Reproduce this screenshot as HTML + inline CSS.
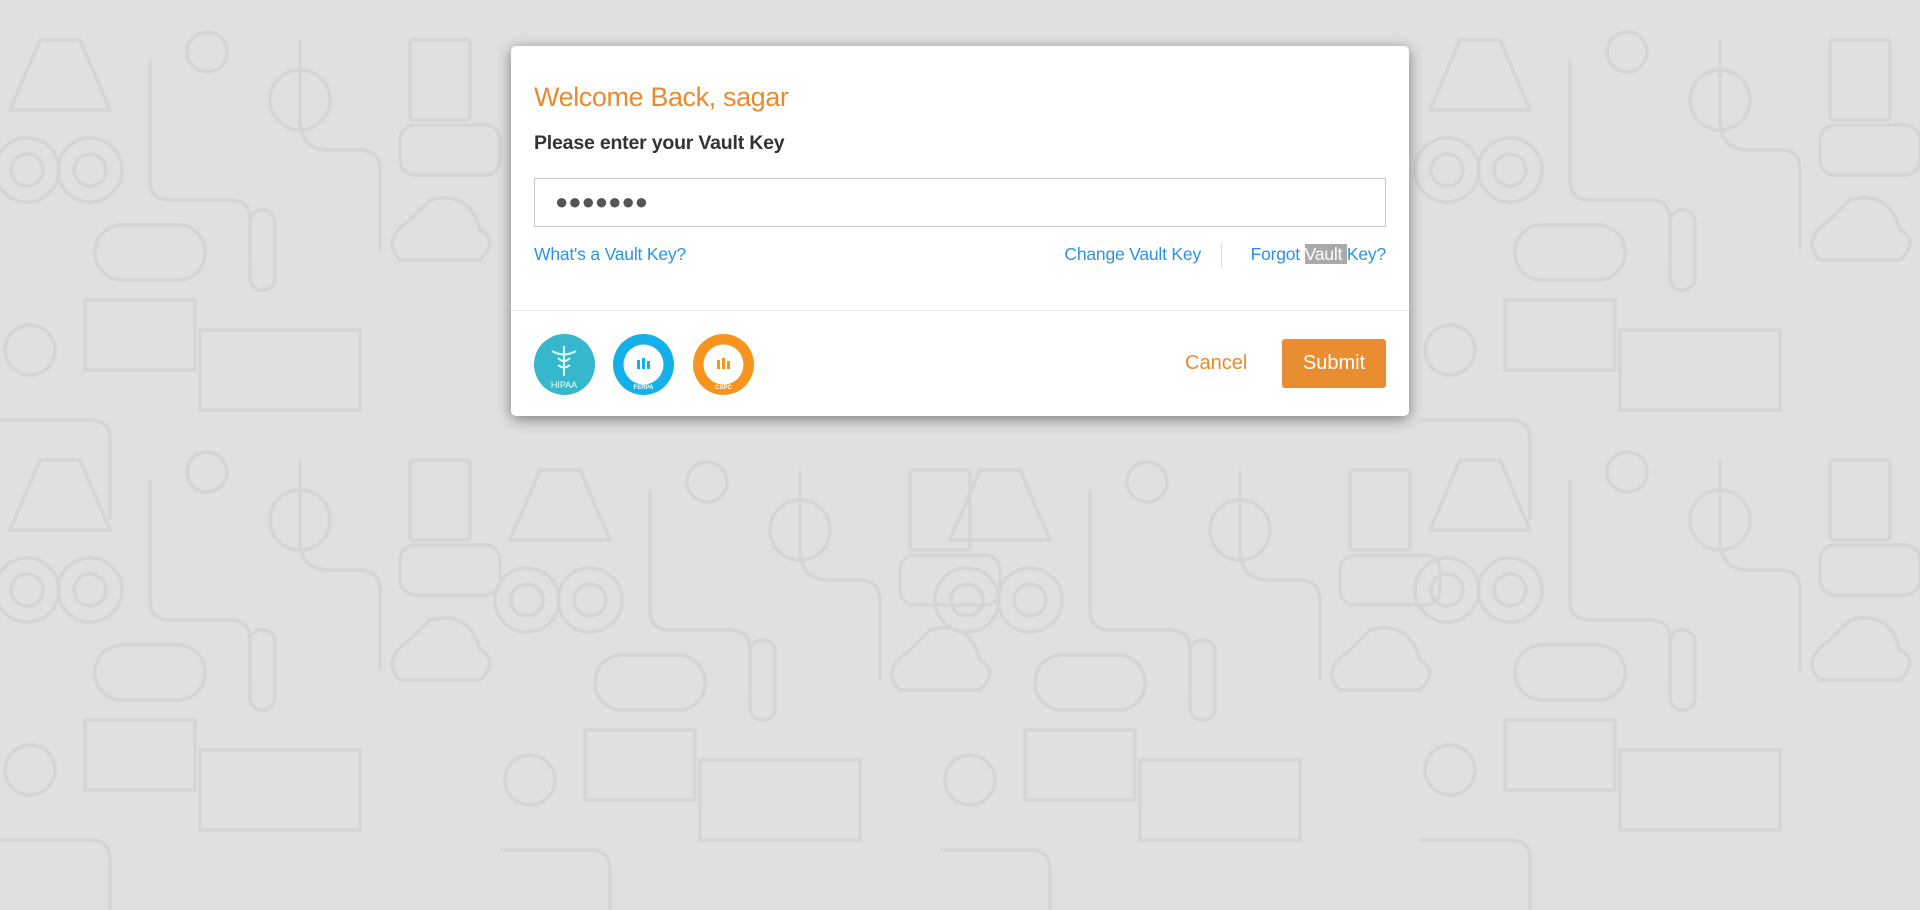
<!DOCTYPE html>
<html><head><meta charset="utf-8"><style>
html,body{margin:0;padding:0;width:1920px;height:910px;overflow:hidden;background:#e0e0e0;font-family:"Liberation Sans",sans-serif;}
.bg{position:absolute;left:0;top:0;}
.dlg{position:absolute;left:511px;top:46px;width:898px;height:370px;background:#fff;border-radius:5px;box-shadow:0 3px 14px rgba(0,0,0,.45);}
.t{position:absolute;left:23px;top:36px;font-size:27px;color:#ea8a2e;letter-spacing:-0.4px;}
.s{position:absolute;left:23px;top:86px;font-size:19.5px;font-weight:bold;color:#333;letter-spacing:-0.2px;}
.in{position:absolute;left:23px;top:132px;width:850px;height:47px;border:1px solid #c8c8c8;}
.dots{position:absolute;left:20px;top:10px;font-size:22px;color:#555;letter-spacing:0px;}
.l{position:absolute;top:198px;font-size:17.5px;color:#2b93e3;letter-spacing:-0.2px;}
.div{position:absolute;left:710px;top:196px;width:1px;height:26px;background:#ddd;}
.sep{position:absolute;left:0;top:264px;width:898px;height:1px;background:#e6e6e6;}
.b{position:absolute;top:288px;width:61px;height:61px;border-radius:50%;}
.cancel{position:absolute;left:674px;top:306px;font-size:20px;color:#ea8a2e;}
.sub{position:absolute;left:771px;top:293px;width:104px;height:49px;background:#ea8d30;border-radius:3px;color:#fff;font-size:20px;text-align:center;line-height:49px;}
</style></head><body>
<svg class="bg" width="1920" height="910" fill="none" stroke="#d5d5d5" stroke-width="3.5">
<g id="p">
<circle cx="27" cy="170" r="32"/><circle cx="90" cy="170" r="32"/><circle cx="27" cy="170" r="16"/><circle cx="90" cy="170" r="16"/>
<path d="M10 110 L40 40 L80 40 L110 110 Z"/><circle cx="207" cy="52" r="20"/><path d="M150 60 V180 Q150 200 170 200 H230 Q250 200 250 220 V260"/>
<rect x="95" y="225" width="110" height="55" rx="27"/><rect x="250" y="210" width="25" height="80" rx="12"/>
<path d="M300 40 V120 Q300 150 330 150 H360 Q380 150 380 170 V250"/><circle cx="300" cy="100" r="30"/>
<rect x="85" y="300" width="110" height="70" /><rect x="200" y="330" width="160" height="80"/>
<rect x="410" y="40" width="60" height="80" rx="4"/><rect x="400" y="125" width="100" height="50" rx="15"/>
<path d="M430 200 Q470 190 480 230 Q500 240 480 260 H400 Q380 240 410 220 Z"/>
<circle cx="30" cy="350" r="25"/><path d="M0 420 H90 Q110 420 110 440 V520"/>
</g>
<use href="#p" x="0" y="420"/><use href="#p" x="1420" y="0"/><use href="#p" x="1420" y="420"/>
<use href="#p" x="500" y="430"/><use href="#p" x="940" y="430"/>
</svg>
<div class="dlg">
<div class="t">Welcome Back, sagar</div>
<div class="s">Please enter your Vault Key</div>
<div class="in"><div class="dots">●●●●●●●</div></div>
<div class="l" style="left:23px">What's a Vault Key?</div>
<div class="l" style="right:208px">Change Vault Key</div>
<div class="div"></div>
<div class="l" style="right:23px">Forgot <span style="background:#a9a9a9;color:#fff">Vault </span>Key?</div>
<div class="sep"></div>
<div class="b" style="left:23px;background:#36b7cb;"><svg width="61" height="61"><path d="M30 12 V42 M18 17 Q30 24 42 17 M24 24 Q30 30 36 24 M24 31 Q30 36 36 31" stroke="#dff" stroke-width="2" fill="none"/><text x="30" y="54" fill="#fff" font-size="9" text-anchor="middle" font-family="Liberation Sans">HIPAA</text></svg></div>
<div class="b" style="left:102px;background:#13b0ea;"><svg width="61" height="61"><circle cx="30.5" cy="30.5" r="20" fill="#fff"/><rect x="24" y="26" width="3" height="9" fill="#13b0ea"/><rect x="29" y="24" width="3" height="11" fill="#13b0ea"/><rect x="34" y="27" width="3" height="8" fill="#13b0ea"/><text x="30.5" y="55" fill="#fff" font-size="6" text-anchor="middle" font-family="Liberation Sans" font-weight="bold">FERPA</text></svg></div>
<div class="b" style="left:182px;background:#f7941d;"><svg width="61" height="61"><circle cx="30.5" cy="30.5" r="20" fill="#fff"/><rect x="24" y="26" width="3" height="9" fill="#f7941d"/><rect x="29" y="24" width="3" height="11" fill="#f7941d"/><rect x="34" y="27" width="3" height="8" fill="#f7941d"/><text x="30.5" y="55" fill="#fff" font-size="6" text-anchor="middle" font-family="Liberation Sans" font-weight="bold">CSPC</text></svg></div>
<div class="cancel">Cancel</div>
<div class="sub">Submit</div>
</div>
</body></html>
